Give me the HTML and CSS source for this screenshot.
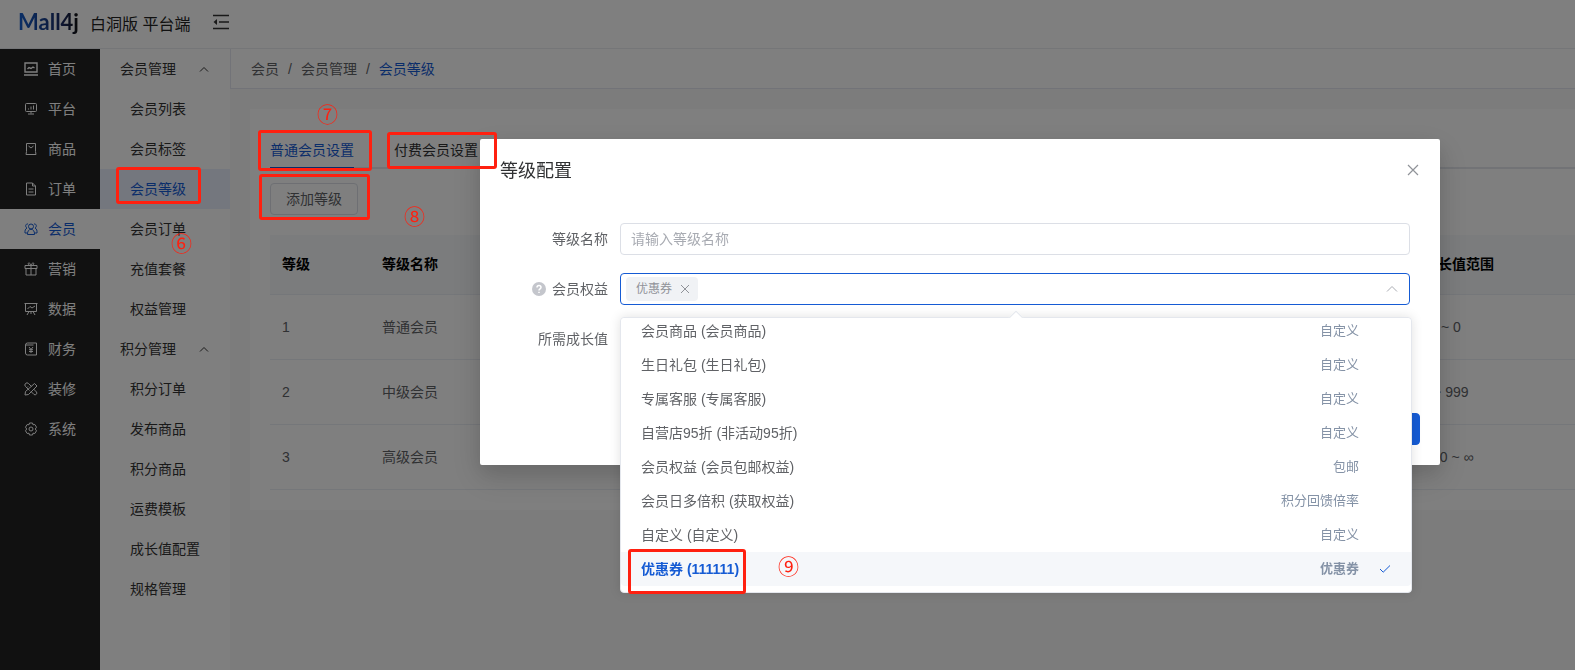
FILE: index.html
```html
<!DOCTYPE html>
<html lang="zh-CN">
<head>
  <meta charset="UTF-8" />
  <meta name="viewport" content="width=device-width, initial-scale=1.0" />
  <title>会员等级</title>
  <link rel="stylesheet" href="styles.css">
</head>

<body>

<header class="header">
  <span class="logo">Mall4j</span>
  <span class="site-name">白洞版 平台端</span>
  <button class="icon-btn fold" type="button" aria-label="收起菜单">
    <svg width="18" height="16" viewBox="0 0 18 16"><path d="M1 1.500h16M7 8h10M1 14.500h16" stroke="#333" stroke-width="1.600" fill="none"/><path d="M5 5v6L1.500 8z" fill="#333"/></svg>
  </button>
</header>

<div class="layout">
  <nav class="sidebar">
    <a href="#"><svg viewBox="0 0 14 14"><path stroke-width="1.400" d="M1 1h12v9H1zM0 13h14"/><path stroke-width="1.400" d="M3.500 7l1.500-1.500 2 1 2-1.500 1.500 1"/></svg>首页</a>
    <a href="#"><svg viewBox="0 0 14 14"><rect x="1.500" y="1.500" width="11" height="8" rx="1"/><path d="M4.500 7.500v-1M7 7.500v-3M9.500 7.500v-4M7 9.500v2M4 12h6"/></svg>平台</a>
    <a href="#"><svg viewBox="0 0 14 14"><path d="M2.500 1.500h9v8l.5 3h-10l.5-3z"/><path d="M4.500 4l2.500 2 2.500-2"/></svg>商品</a>
    <a href="#"><svg viewBox="0 0 14 14"><path d="M2.500 1h6l3 3v9h-9z"/><path d="M8.500 1v3h3M4.500 7h5M4.500 10h5"/></svg>订单</a>
    <a href="#" class="active"><svg viewBox="0 0 14 14"><circle cx="7" cy="4.500" r="2.500"/><path d="M3.500 12.500c-.5-7 7.500-7 7 0zM4 2C1.500 1.500.8 4.800 3 6 1.200 7 .8 8.500 1 11h2.500M10 2c2.500-.5 3.200 2.800 1 4 1.800 1 2.200 2.500 2 5h-2.500"/></svg>会员</a>
    <a href="#"><svg viewBox="0 0 14 14"><path d="M1 3.500h12v3H1zM2 6.500h10v6.500H2zM7 3.500V13M7 3.500C4 3.500 3.500 1 4.800 1S7 2.500 7 3.500zM7 3.500c3 0 3.500-2.500 2.200-2.500S7 2.500 7 3.500z"/></svg>营销</a>
    <a href="#"><svg viewBox="0 0 14 14"><path d="M.5 1.500h13M1.500 1.500v8h11v-8M3.500 7l2.500-2.500 2 1.500 3-2M5 9.500l-2 3.500M9 9.500l2 3.500M7 9.500V12"/></svg>数据</a>
    <a href="#"><svg viewBox="0 0 14 14"><path d="M3.500 1h9v12h-9a2 2 0 0 1-2-2V3a2 2 0 0 1 2-2zM1.500 3h8"/><path d="M5 5l2 2.500L9 5M7 7.500V11M5 7.700h4M5 9.500h4"/></svg>财务</a>
    <a href="#"><svg viewBox="0 0 14 14"><path d="M5.500 8.500L1.500 4.500a2 2 0 0 1 3-3l3 3M10.500 1.500l2.500 2.500-8.500 8.500-3.500.500.500-3.500zM9.500 7l3 3a1.800 1.800 0 0 1-2.500 2.500L7 9.500M3 5.500l1-1"/></svg>装修</a>
    <a href="#"><svg viewBox="0 0 14 14"><path d="M5.500 1h3l.5 1.800 1.800-.3 1.700 2.700L11.300 7l1.200 1.800-1.700 2.700-1.800-.3-.5 1.800h-3L5 11.200l-1.800.3L1.500 8.800 2.700 7 1.500 5.200l1.700-2.700 1.800.3z"/><circle cx="7" cy="7" r="2"/></svg>系统</a>
  </nav>

  <nav class="submenu">
    <button class="group" type="button">会员管理<svg width="10" height="6" viewBox="0 0 10 6"><path d="M1 5.500l4-4 4 4"/></svg></button>
    <a href="#">会员列表</a>
    <a href="#">会员标签</a>
    <a href="#" class="active">会员等级</a>
    <a href="#">会员订单</a>
    <a href="#">充值套餐</a>
    <a href="#">权益管理</a>
    <button class="group" type="button">积分管理<svg width="10" height="6" viewBox="0 0 10 6"><path d="M1 5.500l4-4 4 4"/></svg></button>
    <a href="#">积分订单</a>
    <a href="#">发布商品</a>
    <a href="#">积分商品</a>
    <a href="#">运费模板</a>
    <a href="#">成长值配置</a>
    <a href="#">规格管理</a>
  </nav>

  <main class="main">
    <div class="breadcrumb">
      <a href="#">会员</a><i>/</i><a href="#">会员管理</a><i>/</i><a href="#" class="current">会员等级</a>
    </div>

    <section class="card">
      <div class="tabs" role="tablist">
        <button type="button" role="tab" class="tab active" aria-selected="true">普通会员设置</button>
        <button type="button" role="tab" class="tab" aria-selected="false">付费会员设置</button>
      </div>
      <button type="button" class="btn">添加等级</button>
      <table class="table">
        <thead>
          <tr><th class="col-level">等级</th><th>等级名称</th><th class="col-range">所需成长值范围</th></tr>
        </thead>
        <tbody>
          <tr><td>1</td><td>普通会员</td><td class="col-range">0 ~ 0</td></tr>
          <tr><td>2</td><td>中级会员</td><td class="col-range">1 ~ 999</td></tr>
          <tr><td>3</td><td>高级会员</td><td class="col-range">1000 ~ ∞</td></tr>
        </tbody>
      </table>
    </section>
  </main>
</div>

<div class="overlay">
  <div class="dialog" role="dialog" aria-labelledby="dialogTitle">
    <div class="dialog-header">
      <h2 id="dialogTitle">等级配置</h2>
      <button class="icon-btn" type="button" aria-label="关闭">
        <svg width="12" height="12" viewBox="0 0 12 12"><path d="M1 1l10 10M11 1L1 11" stroke="#909399" stroke-width="1.200"/></svg>
      </button>
    </div>

    <form class="dialog-body">
      <div class="form-item">
        <label for="levelName">等级名称</label>
        <input class="input" id="levelName" type="text" placeholder="请输入等级名称" />
      </div>
      <div class="form-item">
        <label for="rights">
          <svg class="help" width="14" height="14" viewBox="0 0 14 14"><circle cx="7" cy="7" r="7" fill="#c4c6cc"/><path d="M5 5.500c0-2.600 4-2.600 4 0 0 1.400-2 1.500-2 3M7 9.700v1.300" stroke="#fff" stroke-width="1.500" fill="none"/></svg>会员权益</label>
        <div class="select">
          <span class="tag">优惠券
            <button class="icon-btn" type="button" aria-label="移除"><svg width="10" height="10" viewBox="0 0 10 10"><path d="M1 1l8 8M9 1L1 9" stroke="#909399"/></svg></button>
          </span>
          <input id="rights" type="text" role="combobox" aria-expanded="true" aria-controls="rightsList" readonly />
          <svg width="12" height="8" viewBox="0 0 12 8"><path d="M1 6.500l5-5 5 5" stroke="#a8abb2" fill="none"/></svg>

          <div class="dropdown">
            <div class="scroll">
              <ul id="rightsList" role="listbox">
                <li role="option"><span>会员商品 (会员商品)</span><em>自定义</em></li>
                <li role="option"><span>生日礼包 (生日礼包)</span><em>自定义</em></li>
                <li role="option"><span>专属客服 (专属客服)</span><em>自定义</em></li>
                <li role="option"><span>自营店95折 (非活动95折)</span><em>自定义</em></li>
                <li role="option"><span>会员权益 (会员包邮权益)</span><em>包邮</em></li>
                <li role="option"><span>会员日多倍积 (获取权益)</span><em>积分回馈倍率</em></li>
                <li role="option"><span>自定义 (自定义)</span><em>自定义</em></li>
                <li role="option" class="selected" aria-selected="true"><span>优惠券 (111111)</span><em>优惠券</em>
                  <svg class="check" width="12" height="10" viewBox="0 0 12 10"><path d="M1 5l3.200 3.200L11 1.500" stroke="#155bd4" fill="none"/></svg></li>
              </ul>
            </div>
          </div>
        </div>
      </div>
      <div class="form-item">
        <label for="growth">所需成长值</label>
        <input class="input" id="growth" type="text" />
      </div>
    </form>

    <div class="dialog-footer">
      <button type="button" class="btn">取消</button>
      <button type="button" class="btn primary">确定</button>
    </div>
  </div>
</div>

<!-- guide marks -->
<div class="marks">
  <div class="box box-menu"></div>
  <div class="box box-tab1"></div>
  <div class="box box-tab2"></div>
  <div class="box box-add"></div>
  <div class="box box-option"></div>
  <span class="num num6">⑥</span>
  <span class="num num7">⑦</span>
  <span class="num num8">⑧</span>
  <span class="num num9">⑨</span>
</div>

</body>
</html>
```
FILE: styles.css
```css
* {
  margin: 0;
  padding: 0;
  box-sizing: border-box;
}

body, html {
  height: 100%;
  overflow: hidden;
}

body {
  display: flex;
  flex-direction: column;
  font-family: "Liberation Sans", "Noto Sans CJK SC", sans-serif;
  font-size: 14px;
  line-height: 20px;
  color: #606266;
}

a {
  color: inherit;
  text-decoration: none;
}

button, input {
  font: inherit;
  color: inherit;
}

.icon-btn {
  display: flex;
  border: 0;
  background: none;
  cursor: pointer;
}

/* header */
.header {
  display: flex;
  align-items: center;
  height: 49px;
  padding-left: 18px;
  border-bottom: 1px solid #ebedf0;
  background: #fff;
}

.logo {
  width: 72px;
  padding-bottom: 4px;
  font-family: Lato, sans-serif;
  font-size: 22px;
  font-weight: bold;
  line-height: 28px;
  background: linear-gradient(90deg, #1560d0, #1c2a60 45px, #111 60px);
  -webkit-background-clip: text;
  background-clip: text;
  color: transparent;
}

.site-name {
  padding-top: 2px;
  font-size: 16px;
  color: #222;
}

.fold {
  margin-left: 22px;
  margin-bottom: 4px;
}

/* layout */
.layout {
  flex: 1;
  display: flex;
  min-height: 0;
}

.sidebar {
  width: 100px;
  flex-shrink: 0;
  background: #222;
  color: #fff;
}

.sidebar a {
  display: flex;
  align-items: center;
  gap: 10px;
  height: 40px;
  padding-left: 24px;
}

.sidebar svg {
  width: 14px;
  height: 14px;
  fill: none;
  stroke: currentColor;
}

.sidebar .active {
  background: #fff;
  color: #155bd4;
}

.submenu {
  width: 130px;
  flex-shrink: 0;
  background: #fff;
  color: #333;
}

.submenu a {
  display: block;
  padding-left: 30px;
  line-height: 40px;
}

.submenu .active {
  background: #e8eefc;
  color: #155bd4;
}

.group {
  display: flex;
  align-items: center;
  justify-content: space-between;
  width: 100%;
  height: 40px;
  padding: 0 21px 0 20px;
  border: 0;
  background: none;
}

.group svg {
  fill: none;
  stroke: #333;
}

.main {
  flex: 1;
  min-width: 0;
  background: #f8f8f8;
}

.breadcrumb {
  display: flex;
  align-items: center;
  height: 40px;
  padding-left: 20px;
  border-left: 1px solid #e4e7f0;
  border-bottom: 1px solid #e4e7f0;
  background: #fff;
}

.breadcrumb i {
  margin: 0 9px;
  font-style: normal;
}

.breadcrumb .current {
  color: #155bd4;
}

/* member level card */
.card {
  margin: 20px 0 0 20px;
  padding: 20px 0 20px 20px;
  background: #fff;
}

.tabs {
  display: flex;
  gap: 40px;
  height: 40px;
  margin-bottom: 14px;
  box-shadow: inset 0 -2px #e4e7ed;
}

.tab {
  border: 0;
  border-bottom: 2px solid transparent;
  padding-top: 4px;
  background: none;
  color: #303133;
}

.tab.active {
  border-color: #155bd4;
  color: #155bd4;
}

.btn {
  height: 32px;
  padding: 0 15px;
  border: 1px solid #dcdfe6;
  border-radius: 4px;
  background: #fff;
}

.btn.primary {
  border-color: #155bd4;
  background: #155bd4;
  color: #fff;
}

.table {
  width: 100%;
  margin-top: 20px;
  border-collapse: separate;
  border-spacing: 0;
  table-layout: fixed;
}

.table th, .table td {
  height: 65px;
  padding: 0 12px;
  border-bottom: 1px solid #ebeef5;
  text-align: left;
}

.table th {
  height: 60px;
  padding-bottom: 2px;
  background: #f7f8fa;
  color: #000;
}

.table .col-level {
  width: 100px;
}

.table .col-range {
  width: 260px;
  text-align: center;
}

/* dialog */
.overlay {
  position: fixed;
  inset: 0;
  background: rgba(0, 0, 0, .5);
}

.dialog {
  margin: 139px 135px 0 480px;
  border-radius: 2px;
  background: #fff;
  box-shadow: 0 12px 32px 4px rgba(0, 0, 0, .1), 0 8px 20px rgba(0, 0, 0, .1);
}

.dialog-header {
  display: flex;
  align-items: center;
  justify-content: space-between;
  padding: 18px 21px 10px 20px;
}

.dialog-header h2 {
  padding-top: 2px;
  font-size: 18px;
  font-weight: normal;
  line-height: 24px;
  color: #303133;
}

.dialog-body {
  padding: 30px;
}

.form-item {
  display: flex;
  margin-bottom: 18px;
}

.form-item:last-child {
  margin-bottom: 28px;
}

.form-item label {
  display: flex;
  align-items: center;
  justify-content: flex-end;
  gap: 6px;
  width: 110px;
  height: 32px;
  padding-right: 12px;
}

.input {
  flex: 1;
  height: 32px;
  padding: 0 10px;
  border: 1px solid #dcdfe6;
  border-radius: 4px;
  outline: none;
}

.input::placeholder {
  color: #a8abb2;
}

.select {
  position: relative;
  flex: 1;
  display: flex;
  align-items: center;
  height: 32px;
  padding: 0 11px 0 5px;
  border: 1px solid #155bd4;
  border-radius: 4px;
}

.select input {
  flex: 1;
  min-width: 0;
  border: 0;
  outline: none;
}

.tag {
  display: flex;
  align-items: center;
  gap: 8px;
  height: 24px;
  padding: 0 8px 0 10px;
  border-radius: 4px;
  background: #f0f2f5;
  font-size: 12px;
  color: #909399;
}

.dropdown {
  position: absolute;
  z-index: 1;
  top: 43px;
  left: -1px;
  right: -3px;
  padding-bottom: 6px;
  border: 1px solid #e4e7ed;
  border-radius: 4px;
  background: #fff;
  box-shadow: 0 0 12px rgba(0, 0, 0, .12);
}

.dropdown::before {
  content: "";
  position: absolute;
  top: -5px;
  left: calc(50% - 6px);
  width: 10px;
  height: 10px;
  border: 1px solid #e4e7ed;
  background: #fff;
  transform: rotate(45deg);
}

.scroll {
  position: relative;
  display: flex;
  flex-direction: column;
  justify-content: flex-end;
  height: 268px;
  overflow: hidden;
  border-radius: 4px;
  background: #fff;
}

.dropdown li {
  position: relative;
  display: flex;
  justify-content: space-between;
  height: 34px;
  padding: 0 52px 0 20px;
  line-height: 34px;
}

.dropdown em {
  font-size: 13px;
  font-style: normal;
  color: #8492a6;
}

.dropdown .selected {
  background: #f5f7fa;
  color: #155bd4;
  font-weight: bold;
}

.check {
  position: absolute;
  top: 12px;
  right: 20px;
}

.dialog-footer {
  display: flex;
  justify-content: flex-end;
  gap: 12px;
  padding: 0 20px 20px;
}

/* guide marks */
.marks {
  position: fixed;
  inset: 0;
  pointer-events: none;
}

.box {
  position: absolute;
  border: 3px solid #ff2010;
  border-radius: 3px;
}

.box-menu { left: 116px; top: 167px; width: 85px; height: 37px; }
.box-tab1 { left: 258px; top: 130px; width: 114px; height: 41px; }
.box-tab2 { left: 387px; top: 132px; width: 110px; height: 37px; }
.box-add { left: 259px; top: 174px; width: 111px; height: 46px; }
.box-option { left: 628px; top: 549px; width: 118px; height: 45px; }

.num {
  position: absolute;
  font-family: "Noto Sans CJK SC", sans-serif;
  font-size: 21px;
  line-height: 22px;
  color: #ff2010;
}

.num6 { left: 171px; top: 231px; }
.num7 { left: 317px; top: 102px; }
.num8 { left: 404px; top: 204px; }
.num9 { left: 778px; top: 554px; }
```
